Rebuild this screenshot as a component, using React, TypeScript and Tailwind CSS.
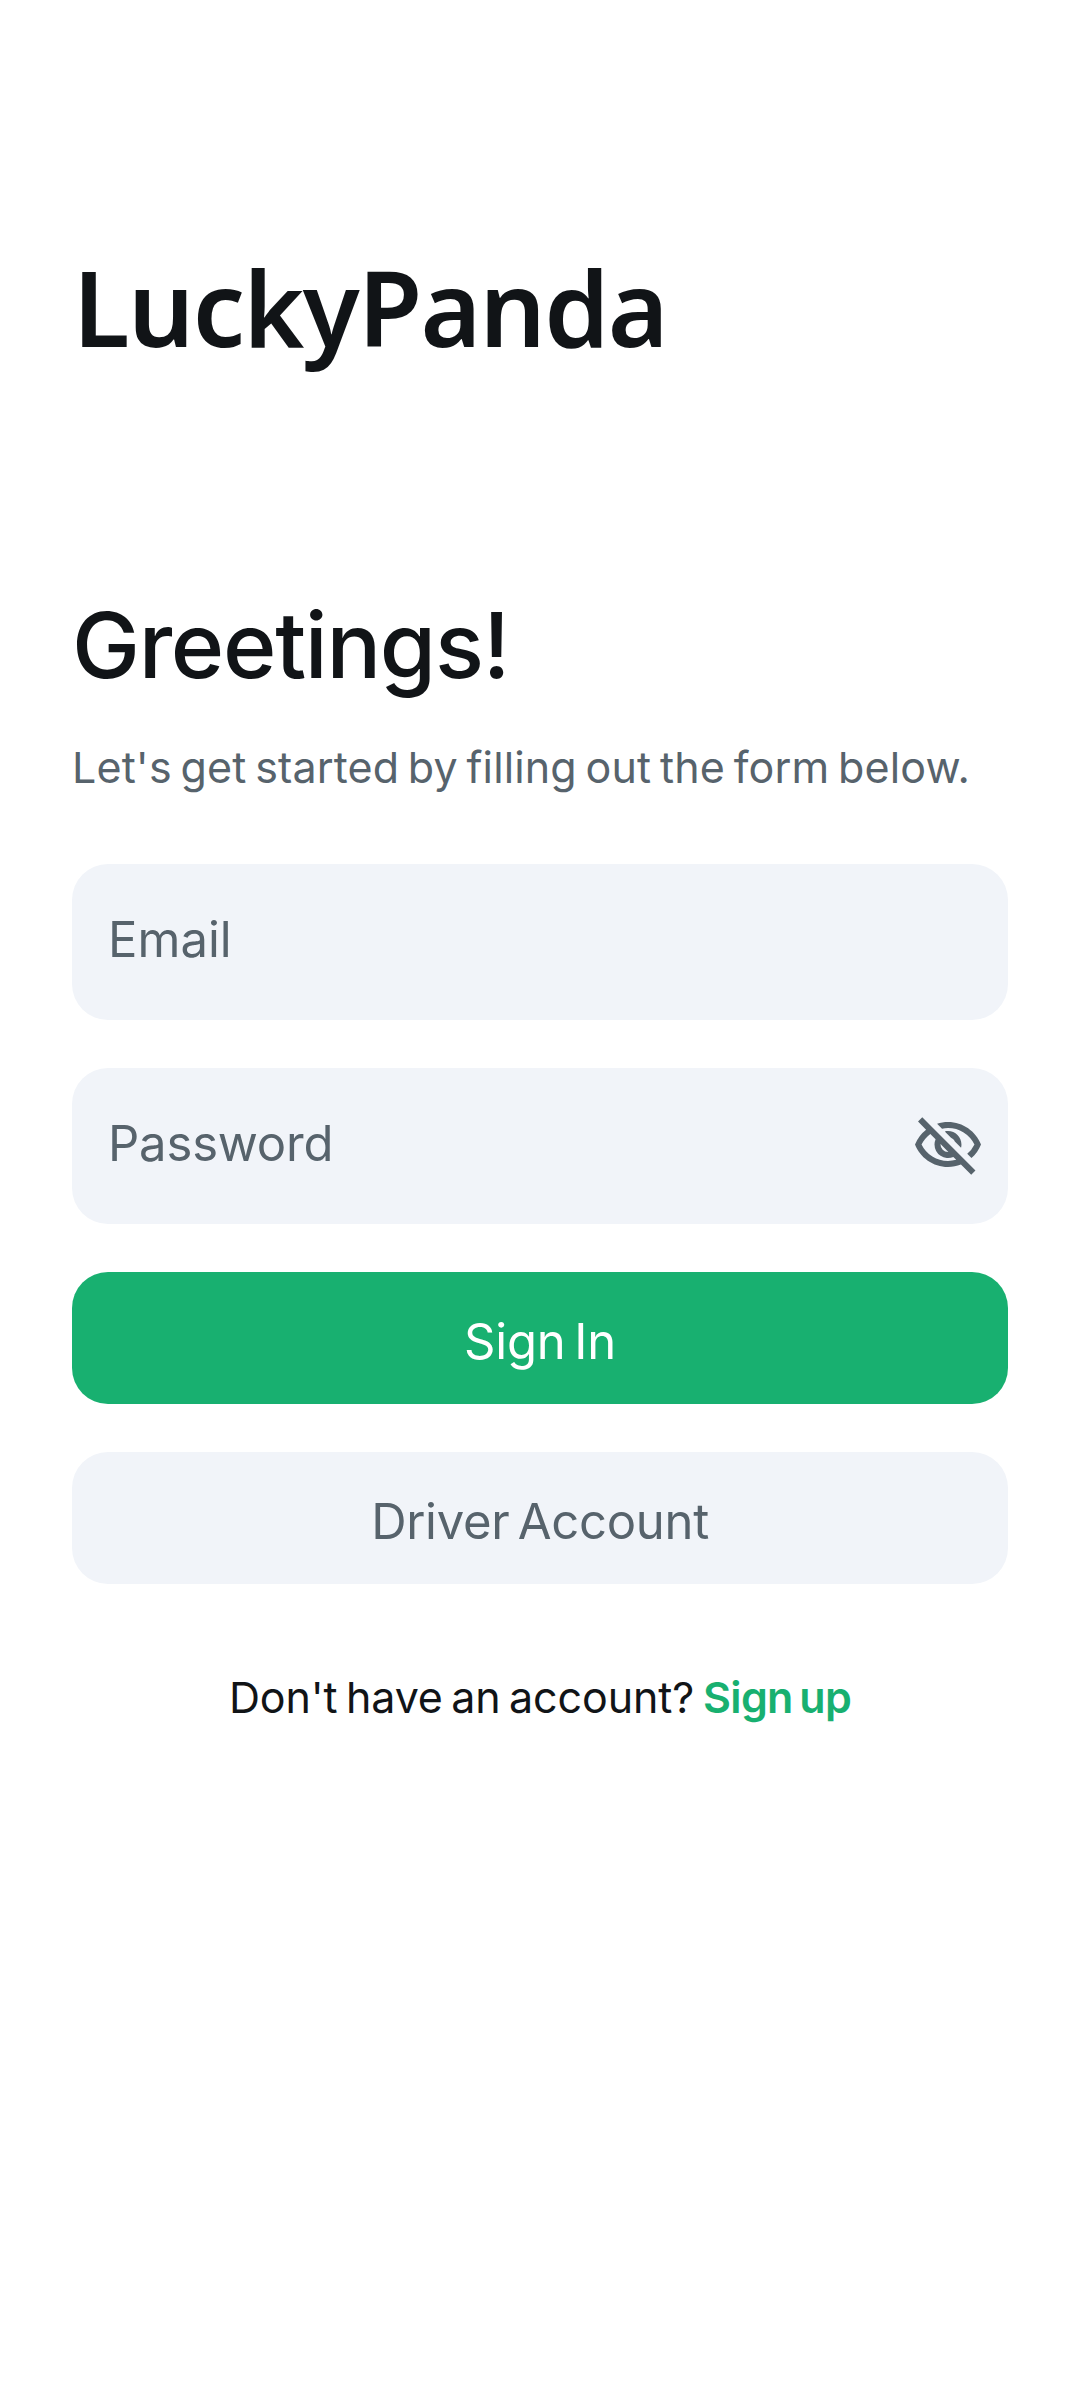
import { MdOutlineVisibilityOff } from "react-icons/md";

const inputClass =
  "min-w-0 flex-1 bg-transparent pb-[5px] text-[49px] leading-[60px] text-[#57636c] outline-none placeholder:text-[#57636c] placeholder:opacity-100";

export default function App() {
  return (
    <main className="flex min-h-[2400px] w-full flex-col bg-white px-[72px] pt-[240px] font-['Inter',sans-serif] text-[#111417]">
      <div className="h-[134px] pl-px font-['Noto_Sans',sans-serif] text-[104px] leading-[134px] font-semibold tracking-[-1.67px] whitespace-nowrap">
        LuckyPanda
      </div>

      <h1 className="mt-[221px] h-[100px] text-[91px] leading-[100px] font-medium tracking-[-1.31px] whitespace-nowrap">
        Greetings!
      </h1>
      <p className="mt-[42px] h-[60px] text-[43px] leading-[60px] tracking-[0.14px] whitespace-nowrap text-[#57636c] [word-spacing:-3.5px]">
        Let's get started by filling out the form below.
      </p>

      <form className="mt-[67px] flex flex-col gap-12" onSubmit={(e) => e.preventDefault()}>
        <label className="flex h-[156px] items-center rounded-[36px] bg-[#f1f4f9] px-9">
          <input type="email" placeholder="Email" className={inputClass} />
        </label>
        <label className="flex h-[156px] items-center rounded-[36px] bg-[#f1f4f9] pr-6 pl-9">
          <input type="password" placeholder="Password" className={`${inputClass} tracking-[-0.18px]`} />
          <MdOutlineVisibilityOff className="size-[72px] shrink-0 text-[#57636c]" />
        </label>
        <button
          type="submit"
          className="flex h-[132px] items-center justify-center rounded-[36px] bg-[#18b070] pt-2 text-[49px] leading-[60px] tracking-[-0.2px] text-white [word-spacing:-5px]"
        >
          Sign In
        </button>
        <button
          type="button"
          className="flex h-[132px] items-center justify-center rounded-[36px] bg-[#f1f4f9] pt-2 text-[49px] leading-[60px] tracking-[-0.3px] text-[#57636c] [word-spacing:-5px]"
        >
          Driver Account
        </button>
      </form>

      <div className="mt-[83px] flex h-[60px] justify-center gap-[9px] text-[43px] leading-[60px] whitespace-nowrap [word-spacing:-3.5px]">
        <span className="tracking-[-0.12px]">Don't have an account?</span>
        <a href="#signup" className="font-semibold tracking-[-0.7px] text-[#18b070]">
          Sign up
        </a>
      </div>
    </main>
  );
}
